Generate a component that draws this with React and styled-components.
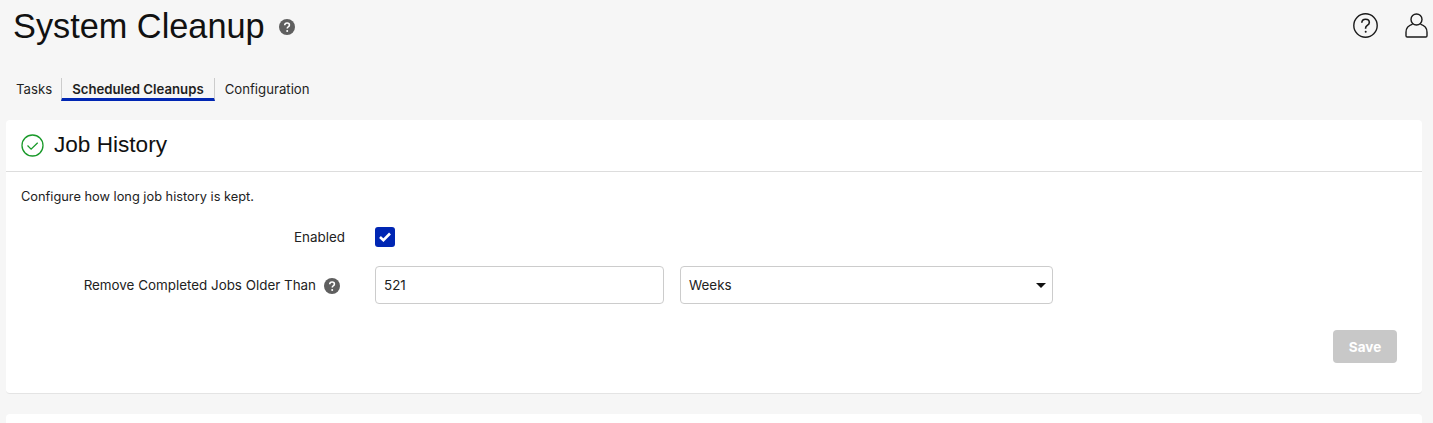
import React from "react";
import styled, { createGlobalStyle } from "styled-components";

const Global = createGlobalStyle`
  html, body { margin: 0; padding: 0; background: #f6f6f6; overflow: hidden; height: 423px; }
  body { font-family: "Inter", "Liberation Sans", sans-serif; color: #111; }
`;
const Page = styled.div`
  width: 1433px; height: 423px; overflow: hidden; box-sizing: border-box;
  padding: 0 11px 0 6px; display: flex; flex-direction: column;
`;
const Header = styled.header`
  display: flex; align-items: center; justify-content: space-between;
  height: 54px; padding-left: 7px; margin-right: -11px;
`;
const TitleGroup = styled.div`display: flex; align-items: center; gap: 14px;`;
const Title = styled.h1`
  margin: -1px 0 0; font-size: 34.3px; font-weight: 400; line-height: 54px;
  font-family: "Liberation Sans", sans-serif; color: #111;
`;
const HeaderIcons = styled.div`display: flex; align-items: center; gap: 27px; margin: -3px 5px 0 0;`;
const IconBox = styled.span`display: flex; color: #1a1a1a;`;
const Tabs = styled.nav`display: flex; align-items: stretch; height: 23px; margin-top: 25px;`;
const Tab = styled.a`
  font-size: 13.2px; line-height: 22px; padding: 0 ${p => (p.$active ? 10 : 9)}px 0 10px; color: #1f1f1f;
  font-weight: ${p => (p.$active ? 600 : 400)};
  ${p => p.$active ? "border-left: 1px solid #ccc; border-right: 1px solid #ccc; border-bottom: 3px solid #0026b3; box-sizing: border-box;" : ""}
`;
const Card = styled.section`
  background: #fff; border-radius: 4px; border-bottom: 1px solid #e4e4e4;
  margin-top: ${p => p.$top}px; flex-shrink: 0;
`;
const Filler = styled(Card)`height: 40px;`;
const CardHeader = styled.div`
  display: flex; align-items: center; gap: 10px; height: 51px; padding-left: 15px;
  border-bottom: 1px solid #ddd;
`;
const CardTitle = styled.h2`
  margin: -2px 0 0; font-size: 22.6px; font-weight: 400; color: #111;
  font-family: "Liberation Sans", sans-serif;
`;
const CardBody = styled.div`padding: 15px 25px 30px 15px;`;
const Description = styled.p`margin: 0; font-size: 12.8px; line-height: 20px; color: #222;`;
const Form = styled.div`display: flex; flex-direction: column; margin-top: 20px;`;
const Row = styled.div`
  display: grid; grid-template-columns: 324px 1fr; column-gap: 30px; align-items: center;
  margin-bottom: ${p => p.$mb || 0}px;
`;
const Label = styled.label`
  display: flex; justify-content: flex-end; align-items: center; gap: 8px;
  font-size: 13.4px; color: #222; line-height: 20px; white-space: nowrap;
`;
const HelpSlot = styled.span`display: flex; margin: 2px 5px 0 0;`;
const Checkbox = styled.span`
  width: 20px; height: 20px; border-radius: 3px; background: #0026b3; display: flex;
  align-items: center; justify-content: center;
`;
const Controls = styled.div`display: flex; gap: 16px;`;
const TextInput = styled.div`
  width: 289px; height: 38px; box-sizing: border-box; border: 1px solid #ccc; border-radius: 4px;
  padding: 0 8px; font-size: 13.4px; display: flex; align-items: center; color: #222;
`;
const SelectBox = styled(TextInput)`width: 373px; justify-content: space-between; padding-right: 6px;`;
const Caret = styled.span`
  width: 0; height: 0; border-left: 5px solid transparent; border-right: 5px solid transparent;
  border-top: 5px solid #111;
`;
const Actions = styled.div`display: flex; justify-content: flex-end; margin-top: 26px;`;
const SaveButton = styled.button`
  width: 64px; height: 33px; border: 0; border-radius: 4px; background: #c8c8c8; color: #fff;
  font-family: inherit; font-size: 13.5px; font-weight: 700; padding: 0;
`;

const HelpDot = () => (
  <svg width="16" height="16" viewBox="0 0 16 16">
    <circle cx="8" cy="8" r="8" fill="#5f5f5f" />
    <path d="M5.7 6.2c.1-1.4 1.1-2.2 2.4-2.2 1.3 0 2.3.8 2.3 2 0 1-.6 1.5-1.2 1.9-.6.4-.9.7-.9 1.4v.3" fill="none" stroke="#fff" strokeWidth="1.6" />
    <circle cx="8.2" cy="12" r="1" fill="#fff" />
  </svg>
);

export default function App() {
  return (
    <Page>
      <Global />
      <Header>
        <TitleGroup>
          <Title>System Cleanup</Title>
          <HelpDot />
        </TitleGroup>
        <HeaderIcons>
          <IconBox>
            <svg width="25" height="25" viewBox="0 0 25 25" fill="none" stroke="#1a1a1a" strokeWidth="1.4">
              <circle cx="12.5" cy="12.5" r="11.7" />
              <path d="M8.8 9.8c.1-2.3 1.6-3.5 3.8-3.5s3.7 1.3 3.7 3.1c0 1.6-1 2.3-2 3-1 .7-1.7 1.3-1.7 2.6v.8" strokeWidth="1.6" />
              <circle cx="12.7" cy="18.7" r="1" fill="#1a1a1a" stroke="none" />
            </svg>
          </IconBox>
          <IconBox>
            <svg width="23" height="25" viewBox="0 0 23 25" fill="none" stroke="#1a1a1a" strokeWidth="1.4">
              <circle cx="11.5" cy="6.5" r="5.5" />
              <path d="M7.6 11.2C3.8 12.4 1 15.4 1 19.2v3.6c0 .7.5 1.2 1.2 1.2h18.6c.7 0 1.2-.5 1.2-1.2v-3.6c0-3.8-2.8-6.8-6.6-8" />
            </svg>
          </IconBox>
        </HeaderIcons>
      </Header>
      <Tabs>
        <Tab>Tasks</Tab>
        <Tab $active>Scheduled Cleanups</Tab>
        <Tab>Configuration</Tab>
      </Tabs>
      <Card $top={19}>
        <CardHeader>
          <svg width="23" height="23" viewBox="0 0 23 23" fill="none" stroke="#1a9a2a" strokeWidth="1.3">
            <circle cx="11.5" cy="11.5" r="10.5" />
            <path d="M6.5 11.5l3.6 3.6 6.6-6.4" />
          </svg>
          <CardTitle>Job History</CardTitle>
        </CardHeader>
        <CardBody>
          <Description>Configure how long job history is kept.</Description>
          <Form>
            <Row $mb={19}>
              <Label>Enabled</Label>
              <Checkbox>
                <svg width="12" height="10" viewBox="0 0 12 10" fill="none" stroke="#fff" strokeWidth="2.6">
                  <path d="M1 5l3.4 3.2L11 1.5" />
                </svg>
              </Checkbox>
            </Row>
            <Row>
              <Label>Remove Completed Jobs Older Than <HelpSlot><HelpDot /></HelpSlot></Label>
              <Controls>
                <TextInput>521</TextInput>
                <SelectBox>Weeks<Caret /></SelectBox>
              </Controls>
            </Row>
            <Actions><SaveButton>Save</SaveButton></Actions>
          </Form>
        </CardBody>
      </Card>
      <Filler $top={20} />
    </Page>
  );
}
